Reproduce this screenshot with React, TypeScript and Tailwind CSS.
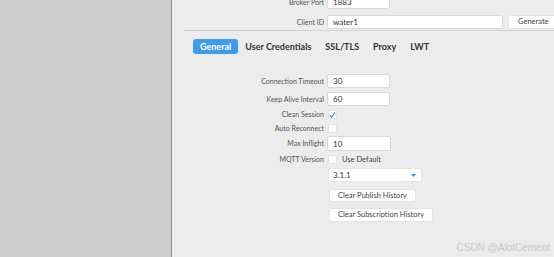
import React from 'react';

const font = { fontFamily: 'Lato, "Open Sans", sans-serif' };

interface RowProps {
    label?: string;
    className?: string;
    children?: React.ReactNode;
}

// one label/control line of the settings form
const Row: React.FC<RowProps> = ({ label, className = '', children }) => (
    <div className={`grid grid-cols-[152px_auto] gap-x-[3px] items-center ${className}`}>
        <span className="text-right text-[7px] leading-none text-[#555] whitespace-nowrap">{label}</span>
        <div className="flex items-center h-full">{children}</div>
    </div>
);

const TextBox: React.FC<{ value: string; width: string }> = ({ value, width }) => (
    <div className={`${width} h-full bg-white border border-[#d9d9d9] rounded-[2px] flex items-center pl-[5px] text-[8px] text-[#333]`}>
        {value}
    </div>
);

const CheckBox: React.FC<{ checked?: boolean }> = ({ checked }) => (
    <div className="ml-px w-[9px] h-[9px] bg-white border border-[#e2e2e2] rounded-[1px] flex items-center justify-center">
        {checked && (
            <svg width="8" height="8" viewBox="0 0 8 8">
                <polyline points="1,4.2 3,6.6 7,0.8" fill="none" stroke="#2f8ef0" strokeWidth="1.2" />
            </svg>
        )}
    </div>
);

const tabs = ['General', 'User Credentials', 'SSL/TLS', 'Proxy', 'LWT'];

export default function App() {
    return (
        <div className="w-[554px] h-[257px] flex overflow-hidden bg-[#ececec] relative" style={font}>
            <div className="w-[172px] shrink-0 bg-[#cdcdcd] border-r border-[#8f8f8f]" />

            <div className="flex-1 flex flex-col">
                <Row label="Broker Port" className="h-[14px] -mt-[5px]">
                    <TextBox value="1883" width="w-[63px]" />
                </Row>
                <Row label="Client ID" className="h-[14px] mt-[6px]">
                    <TextBox value="water1" width="w-[176px]" />
                    <button className="ml-[5px] w-[60px] h-full bg-white border border-[#e3e3e3] rounded-[2px] text-[7.5px] text-[#444] text-left pl-[9px]">
                        Generate
                    </button>
                </Row>

                <div className="h-px mt-px ml-[12px] bg-[#d3d3d3]" />

                {/* tabs */}
                <div className="flex items-center mt-[8px] ml-[21px] h-[15px]">
                    {tabs.map((t, i) => (
                        <span
                            key={t}
                            className={`h-full flex items-center px-[7px] text-[9px] font-bold leading-none whitespace-nowrap rounded-[3px] ${
                                i === 0 ? 'bg-[#3d9bf3] text-white' : 'text-[#333]'
                            }`}
                        >
                            {t}
                        </span>
                    ))}
                </div>

                <Row label="Connection Timeout" className="h-[14px] mt-[20px]">
                    <TextBox value="30" width="w-[63px]" />
                </Row>
                <Row label="Keep Alive Interval" className="h-[14px] mt-[4px]">
                    <TextBox value="60" width="w-[63px]" />
                </Row>
                <Row label="Clean Session" className="h-[9px] mt-[4px]">
                    <CheckBox checked />
                </Row>
                <Row label="Auto Reconnect" className="h-[9px] mt-[5px]">
                    <CheckBox />
                </Row>
                <Row label="Max Inflight" className="h-[15px] mt-[3px]">
                    <TextBox value="10" width="w-[64px]" />
                </Row>
                <Row label="MQTT Version" className="h-[9px] mt-[4px]">
                    <CheckBox />
                    <span className="ml-[5px] text-[7.5px] leading-none text-[#444]">Use Default</span>
                </Row>
                <Row className="h-[13px] mt-[4px]">
                    <div className="ml-px w-[94px] h-full bg-white rounded-[2px] border border-[#e6e6e6] flex items-center justify-between pl-[4px] pr-[5px] text-[8px] text-[#333]">
                        <span>3.1.1</span>
                        <svg width="5" height="3" viewBox="0 0 5 3">
                            <polygon points="0,0 5,0 2.5,3" fill="#3a8ee6" />
                        </svg>
                    </div>
                </Row>
                <Row className="h-[13px] mt-[8px]">
                    <button className="ml-[2px] h-full px-[8px] bg-white border border-[#e3e3e3] rounded-[2px] text-[7.5px] leading-none text-[#444] whitespace-nowrap">
                        Clear Publish History
                    </button>
                </Row>
                <Row className="h-[14px] mt-[6px]">
                    <button className="ml-[2px] h-full px-[8px] bg-white border border-[#e3e3e3] rounded-[2px] text-[7.5px] leading-none text-[#444] whitespace-nowrap">
                        Clear Subscription History
                    </button>
                </Row>
            </div>

            <span
                className="absolute right-[4px] bottom-[4px] text-[10px] leading-none text-[#c8c8c8]"
                style={{ fontFamily: '"Liberation Sans", Arial, sans-serif' }}
            >
                CSDN @AlotCement
            </span>
        </div>
    );
}
